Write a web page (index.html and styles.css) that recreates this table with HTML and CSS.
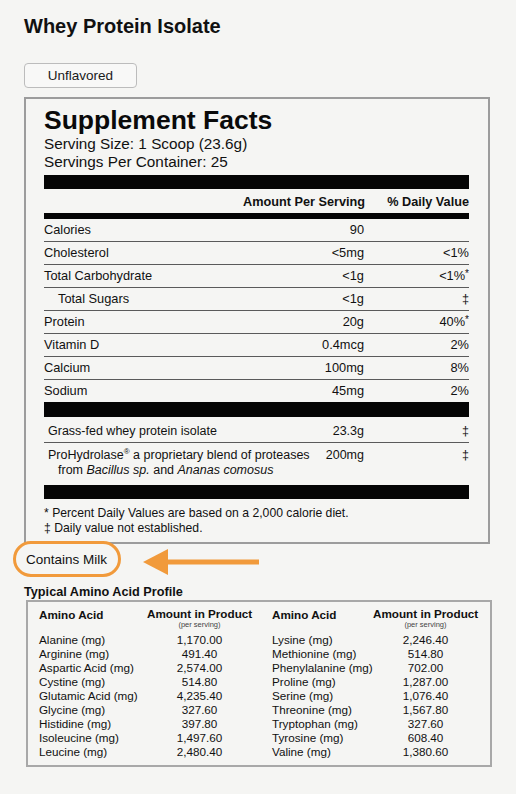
FILE: index.html
```html
<!DOCTYPE html>
<html lang="en">
<head>
<meta charset="utf-8">
<title>Whey Protein Isolate</title>
<link rel="stylesheet" href="styles.css">
</head>
<body>
<div class="page">
  <h1 class="title">Whey Protein Isolate</h1>
  <div class="flavor-row"><button class="flavor-btn" type="button">Unflavored</button></div>

  <section class="facts">
    <h2 class="facts-title">Supplement Facts</h2>
    <div class="serving">Serving Size: 1 Scoop (23.6g)<br>Servings Per Container: 25</div>
    <div class="bar bar-lg"></div>
    <div class="row head"><span class="name"></span><span class="amt">Amount Per Serving</span><span class="dv">% Daily Value</span></div>
    <div class="bar bar-sm"></div>
    <div class="row line"><span class="name">Calories</span><span class="amt">90</span><span class="dv"></span></div>
    <div class="row line"><span class="name">Cholesterol</span><span class="amt">&lt;5mg</span><span class="dv">&lt;1%</span></div>
    <div class="row line"><span class="name">Total Carbohydrate</span><span class="amt">&lt;1g</span><span class="dv">&lt;1%<sup class="ast">*</sup></span></div>
    <div class="row line"><span class="name sub">Total Sugars</span><span class="amt">&lt;1g</span><span class="dv">‡</span></div>
    <div class="row line"><span class="name">Protein</span><span class="amt">20g</span><span class="dv">40%<sup class="ast">*</sup></span></div>
    <div class="row line"><span class="name">Vitamin D</span><span class="amt">0.4mcg</span><span class="dv">2%</span></div>
    <div class="row line"><span class="name">Calcium</span><span class="amt">100mg</span><span class="dv">8%</span></div>
    <div class="row"><span class="name">Sodium</span><span class="amt">45mg</span><span class="dv">2%</span></div>
    <div class="bar bar-lg2"></div>
    <div class="row ing line"><span class="name">Grass-fed whey protein isolate</span><span class="amt">23.3g</span><span class="dv">‡</span></div>
    <div class="row ing ing2"><span class="name">ProHydrolase<sup class="reg">®</sup> a proprietary blend of proteases<br><span class="from">from <i>Bacillus sp.</i> and <i>Ananas comosus</i></span></span><span class="amt">200mg</span><span class="dv">‡</span></div>
    <div class="bar bar-lg"></div>
    <p class="notes">* Percent Daily Values are based on a 2,000 calorie diet.<br>‡ Daily value not established.</p>
  </section>

  <div class="allergen">
    <span class="allergen-text">Contains Milk</span>
    <span class="ring"></span>
    <svg class="arrow" width="118" height="27" viewBox="0 0 118 27" aria-hidden="true">
      <polygon points="0,13 25,0 25,26" fill="#f19a3b"/>
      <rect x="24" y="10.5" width="92" height="5" fill="#f19a3b"/>
    </svg>
  </div>

  <h3 class="amino-title">Typical Amino Acid Profile</h3>
  <section class="amino">
    <div class="amino-col col-a">
      <div class="ah-name">Amino Acid</div>
      <div class="ah-amt">Amount in Product<span class="per">(per serving)</span></div>
      <div class="an first">Alanine (mg)</div><div class="av first">1,170.00</div>
      <div class="an">Arginine (mg)</div><div class="av">491.40</div>
      <div class="an">Aspartic Acid (mg)</div><div class="av">2,574.00</div>
      <div class="an">Cystine (mg)</div><div class="av">514.80</div>
      <div class="an">Glutamic Acid (mg)</div><div class="av">4,235.40</div>
      <div class="an">Glycine (mg)</div><div class="av">327.60</div>
      <div class="an">Histidine (mg)</div><div class="av">397.80</div>
      <div class="an">Isoleucine (mg)</div><div class="av">1,497.60</div>
      <div class="an">Leucine (mg)</div><div class="av">2,480.40</div>
    </div>
    <div class="amino-col col-b">
      <div class="ah-name">Amino Acid</div>
      <div class="ah-amt">Amount in Product<span class="per">(per serving)</span></div>
      <div class="an first">Lysine (mg)</div><div class="av first">2,246.40</div>
      <div class="an">Methionine (mg)</div><div class="av">514.80</div>
      <div class="an">Phenylalanine (mg)</div><div class="av">702.00</div>
      <div class="an">Proline (mg)</div><div class="av">1,287.00</div>
      <div class="an">Serine (mg)</div><div class="av">1,076.40</div>
      <div class="an">Threonine (mg)</div><div class="av">1,567.80</div>
      <div class="an">Tryptophan (mg)</div><div class="av">327.60</div>
      <div class="an">Tyrosine (mg)</div><div class="av">608.40</div>
      <div class="an">Valine (mg)</div><div class="av">1,380.60</div>
    </div>
  </section>
</div>
</body>
</html>
```

FILE: styles.css
```css
* { box-sizing: border-box; }

html, body {
  margin: 0;
  padding: 0;
  background: #f5f5f3;
}

body {
  font-family: "Liberation Sans", Arial, Helvetica, sans-serif;
  color: #111;
}

.page {
  padding: 14px 24px 20px;
}

.title {
  margin: 0;
  font-size: 20px;
  line-height: 24px;
  font-weight: 700;
  color: #111;
}

.flavor-row {
  margin-top: 25px;
}

.flavor-btn {
  display: block;
  width: 113px;
  height: 25px;
  padding: 0;
  border: 1px solid #bcbcbc;
  border-radius: 4px;
  background: #f8f8f7;
  font-family: "Liberation Sans", Arial, sans-serif;
  font-size: 13.5px;
  color: #1a1a1a;
}

/* Supplement facts panel */
.facts {
  width: 466px;
  margin-top: 9px;
  border: 2px solid #9c9c9c;
  padding: 6px 19px 6px 18px;
}

.facts-title {
  margin: 0;
  font-size: 26.5px;
  line-height: 30px;
  font-weight: 700;
  color: #0a0a0a;
}

.serving {
  font-size: 15.3px;
  line-height: 18.4px;
}

.bar { background: #050505; }
.bar-lg { height: 14px; margin-top: 3px; }
.bar-lg2 { height: 15px; }
.bar-sm { height: 6px; }

.row {
  display: flex;
  align-items: flex-start;
  font-size: 12.8px;
  line-height: 22px;
  height: 22px;
}

.row.line {
  height: 23px;
  border-bottom: 1px solid #5a5a5a;
}

.row .name {
  flex: 1 1 auto;
  min-width: 0;
  white-space: nowrap;
}

.row .name.sub { padding-left: 14px; }

.row .amt {
  flex: none;
  width: 121px;
  text-align: right;
  white-space: nowrap;
}

.row .dv {
  flex: none;
  width: 105px;
  text-align: right;
  white-space: nowrap;
}

.ast {
  font-size: 10px;
  line-height: 0;
  vertical-align: 3px;
}

.reg {
  font-size: 8px;
  line-height: 0;
  vertical-align: 5px;
}

.row.head {
  height: 24px;
  padding: 6px 0 3px;
  line-height: 15px;
  font-size: 12.7px;
  font-weight: 700;
}

.row.ing {
  font-size: 12.5px;
  line-height: 15px;
  height: 26px;
  padding: 7px 0 3px;
}

.row.ing .name { padding-left: 4px; }

.row.ing2 {
  height: 39px;
  padding: 5px 0 4px;
}

.from { padding-left: 10px; }

.notes {
  margin: 0;
  padding: 7px 0 0;
  font-size: 12.2px;
  line-height: 15px;
}

/* Allergen callout */
.allergen {
  position: relative;
  margin-top: 8px;
  padding-left: 2px;
  height: 16px;
  font-size: 13.5px;
  line-height: 16px;
}

.ring {
  position: absolute;
  left: -11px;
  top: -11px;
  width: 108px;
  height: 36px;
  border: 3px solid #f19a3b;
  border-radius: 18px;
}

.arrow {
  position: absolute;
  left: 119px;
  top: -3px;
}

.amino-title {
  margin: 17px 0 0;
  font-size: 12.7px;
  line-height: 15px;
  font-weight: 700;
}

/* Amino acid profile */
.amino {
  width: 466px;
  margin-left: 2px;
  border: 2px solid #a8a8a8;
  padding: 5px 12px 6px 11px;
  display: flex;
  gap: 20px;
}

.amino-col {
  display: grid;
  grid-template-columns: 108px 105px;
  font-size: 11.7px;
  line-height: 14px;
}

.amino-col.col-b {
  grid-template-columns: 101px 105px;
}

.ah-name {
  font-weight: 700;
  padding-top: 1px;
}

.ah-amt {
  font-weight: 700;
  text-align: center;
  white-space: nowrap;
}

.per {
  display: block;
  font-weight: 400;
  font-size: 7.5px;
  line-height: 7px;
  color: #444;
  padding-bottom: 5px;
}

.an { white-space: nowrap; }

.av { text-align: center; }
```
